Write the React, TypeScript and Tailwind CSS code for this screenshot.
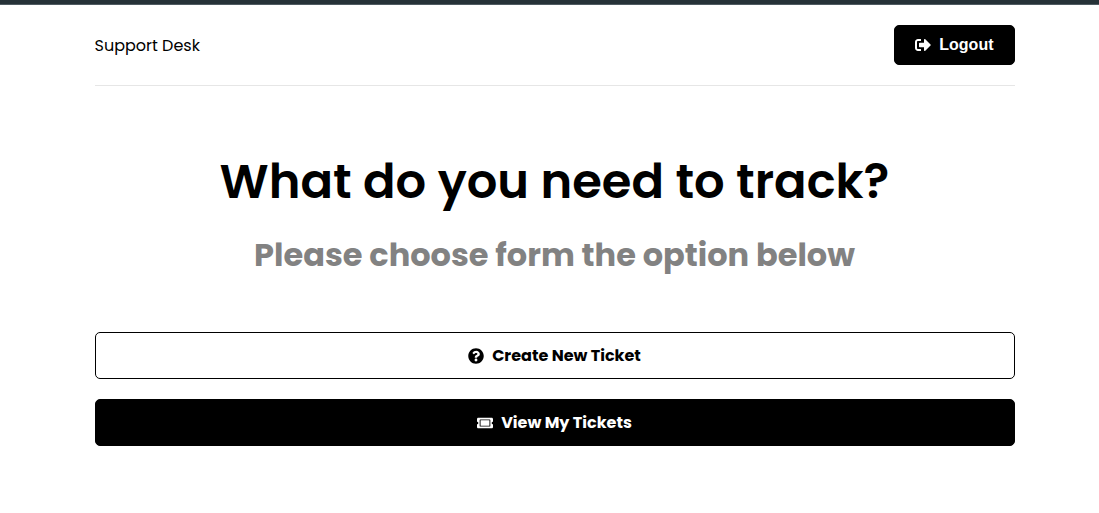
import { FaQuestionCircle, FaSignOutAlt, FaTicketAlt } from "react-icons/fa";

export default function App() {
  return (
    <div className="min-h-screen bg-white font-['Poppins','Inter',sans-serif] text-black">
      <div className="h-[5px] border-b border-[#4f5b62] bg-[#263238]" />
      <div className="pl-[10px]">
        <div className="mx-auto max-w-[960px] px-5">
          <header className="mb-15 flex items-center justify-between border-b border-[#e6e6e6] py-5">
            <a href="#home" className="pt-px text-base">Support Desk</a>
            <button
              type="button"
              className="flex h-10 items-center gap-2 rounded-[5px] border border-black bg-black px-5 font-['Liberation_Sans',sans-serif] text-base font-bold text-white"
            >
              <FaSignOutAlt aria-hidden="true" />
              Logout
            </button>
          </header>
          <main>
            <section className="mb-[53px] text-center">
              <h1 className="text-5xl leading-[72px] font-semibold">What do you need to track?</h1>
              <p className="pt-[13px] text-[32px] leading-12 font-bold text-[#828282]">
                Please choose form the option below
              </p>
            </section>
            <nav className="flex flex-col gap-5">
              <a
                href="#new-ticket"
                className="flex h-[47px] items-center justify-center gap-2 rounded-[5px] border border-black font-bold"
              >
                <FaQuestionCircle aria-hidden="true" />
                Create New Ticket
              </a>
              <a
                href="#tickets"
                className="flex h-[47px] items-center justify-center gap-2 rounded-[5px] border border-black bg-black font-bold text-white"
              >
                <FaTicketAlt aria-hidden="true" />
                View My Tickets
              </a>
            </nav>
          </main>
        </div>
      </div>
    </div>
  );
}
